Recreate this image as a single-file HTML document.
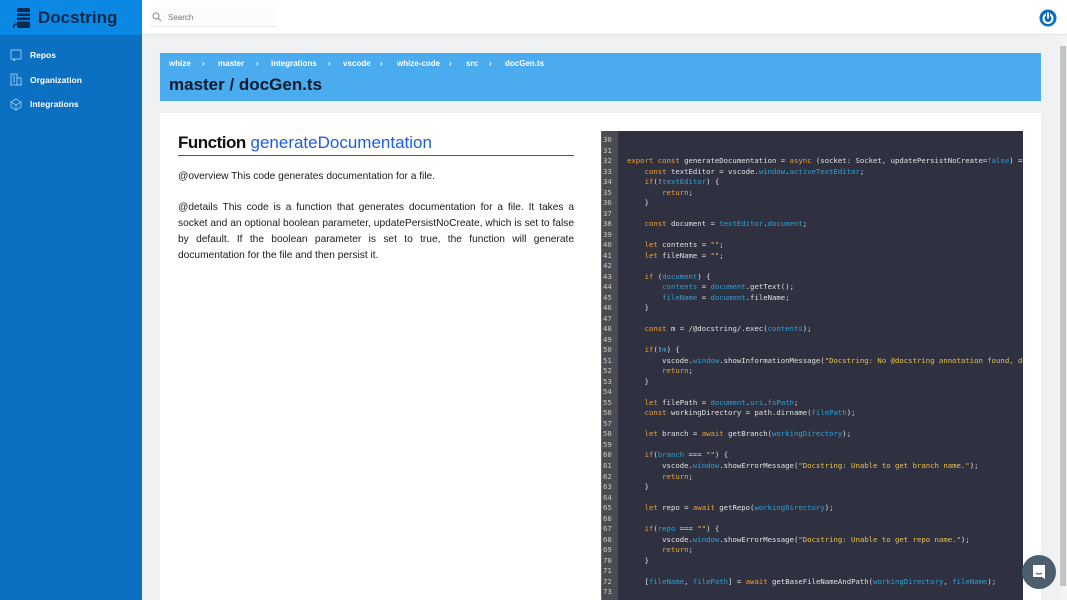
<!DOCTYPE html>
<html><head><meta charset="utf-8"><style>
*{box-sizing:border-box;margin:0;padding:0}
html,body{width:1067px;height:600px;overflow:hidden}
body{font-family:"Liberation Sans",sans-serif;background:#f0f1f3;position:relative}
.side{position:absolute;left:0;top:0;width:142px;height:600px;background:#0b6fc2}
.logo{height:35px;background:#0a88e4;display:flex;align-items:center;padding-left:11px}
.logo span{font-weight:bold;font-size:17px;color:#0c2a4d;margin-left:5px}
.nav{padding-top:8px}
.nav div{height:24.5px;display:flex;align-items:center;padding-left:10px;color:#fff;font-size:8.5px;font-weight:bold}
.nav svg{margin-right:8px}
.top{position:absolute;left:142px;top:0;right:0;height:35px;background:#fff;border-bottom:1px solid #e1e3e6}
.search{position:absolute;left:8px;top:7px;width:127px;height:20px;border-bottom:1px solid #e6e7ea;background:#fcfcfd;font-size:8px;color:#777;padding:6px 0 0 18px}
.pw{position:absolute;right:10px;top:9px}
.sb{position:absolute;left:1059px;top:36px;width:8px;height:564px;background:#f4f4f4}
.sb i{position:absolute;left:1px;top:10px;width:6px;height:540px;background:#c4c4c4}
.crumb{position:absolute;left:160px;top:53px;width:881px;height:48px;background:#4aabee}
.bc span{position:absolute;top:6px;font-size:8px;color:#fff;font-weight:bold;white-space:nowrap}
.crumb h1{position:absolute;left:9px;top:22px;font-size:17px;color:#0d1b2a}
.card{position:absolute;left:160px;top:113px;width:881px;height:487px;background:#fff;overflow:hidden}
.fn{position:absolute;left:18px;top:20px;width:396px;border-bottom:1px solid #555;height:23px;font-size:17px;white-space:nowrap}
.fn b{color:#111;letter-spacing:-.5px}
.fn span{color:#1a5ee6}
.txt{position:absolute;left:18px;top:56px;width:396px;font-size:10.2px;line-height:16px;color:#1a1a1a;text-align:justify}
.code{position:absolute;left:441px;top:18px;width:422px;height:470px;background:#2f3141;overflow:hidden}
.gut{position:absolute;left:0;top:0;width:17px;height:100%;background:#4a4c52;border-left:1px solid #666}
pre{position:absolute;left:2px;top:4px;font-family:"DejaVu Sans Mono","Liberation Mono",monospace;font-size:7.3px;line-height:10.52px;color:#e2e2e2;white-space:pre}
pre .n{color:#c8c8c8;display:inline-block;width:24px}
.k{color:#eaa236}.v{color:#2aa3d8}.s{color:#e8c24a}
.chat{position:absolute;left:1022px;top:555px;width:34px;height:34px;border-radius:50%;background:#4d5f6e}
</style></head><body>
<div class="side">
<div class="logo"><svg width="22" height="24" viewBox="0 0 22 24"><rect x="6" y="2" width="13" height="20" rx="2" fill="#0c2a4d"/><rect x="6" y="6" width="13" height="1.5" fill="#0a88e4"/><rect x="6" y="10" width="13" height="1.5" fill="#0a88e4"/><rect x="6" y="14" width="13" height="1.5" fill="#0a88e4"/><path d="M6 18 Q2 18 3 22" stroke="#0c2a4d" fill="none" stroke-width="1.5"/></svg><span>Docstring</span></div>
<div class="nav">
<div><svg width="12" height="13" viewBox="0 0 12 13"><rect x="1" y="1" width="10" height="9" fill="none" stroke="#8fc4f0"/><rect x="3" y="10" width="2" height="2" fill="#8fc4f0"/></svg>Repos</div>
<div><svg width="12" height="13" viewBox="0 0 12 13"><path d="M1 12V1h6v11M7 5h4v7M0 12h12M3 3h2M3 5h2M3 7h2M3 9h2" fill="none" stroke="#8fc4f0"/></svg>Organization</div>
<div><svg width="12" height="13" viewBox="0 0 12 13"><path d="M6 1l5 3v5l-5 3-5-3V4zM1 4l5 3 5-3M6 7v5" fill="none" stroke="#8fc4f0"/></svg>Integrations</div>
</div></div>
<div class="top"><div class="search"><svg style="position:absolute;left:2px;top:5px" width="10" height="10" viewBox="0 0 10 10"><circle cx="4" cy="4" r="3" fill="none" stroke="#888"/><path d="M6 6l3 3" stroke="#888"/></svg>Search</div>
<svg class="pw" width="18" height="18" viewBox="0 0 18 18"><circle cx="9" cy="9" r="8.5" fill="#0a6fc4"/><circle cx="9" cy="9.5" r="4.5" fill="none" stroke="#fff" stroke-width="2"/><path d="M9 4v6" stroke="#0a6fc4" stroke-width="4"/><path d="M9 3.5v6" stroke="#fff" stroke-width="2"/></svg></div>
<div class="sb"><i></i></div>
<div class="crumb"><div class="bc"><span style="left:9px">whize</span><span style="left:42px">›</span><span style="left:58px">master</span><span style="left:96px">›</span><span style="left:111px">integrations</span><span style="left:168px">›</span><span style="left:183px">vscode</span><span style="left:220px">›</span><span style="left:237px">whize-code</span><span style="left:289px">›</span><span style="left:306px">src</span><span style="left:329px">›</span><span style="left:345px">docGen.ts</span></div><h1>master / docGen.ts</h1></div>
<div class="card">
<div class="fn"><b>Function</b> <span>generateDocumentation</span></div>
<div class="txt"><p>@overview This code generates documentation for a file.</p><p style="margin-top:15px">@details This code is a function that generates documentation for a file. It takes a socket and an optional boolean parameter, updatePersistNoCreate, which is set to false by default. If the boolean parameter is set to true, the function will generate documentation for the file and then persist it.</p></div>
<div class="code"><div class="gut"></div><pre><span class="n">30</span>
<span class="n">31</span>
<span class="n">32</span><span class="k">export const</span> generateDocumentation = <span class="k">async</span> (socket: Socket, updatePersistNoCreate=<span class="v">false</span>) =>
<span class="n">33</span>    <span class="k">const</span> textEditor = vscode.<span class="v">window</span>.<span class="v">activeTextEditor</span>;
<span class="n">34</span>    <span class="k">if</span>(!<span class="v">textEditor</span>) {
<span class="n">35</span>        <span class="k">return</span>;
<span class="n">36</span>    }
<span class="n">37</span>
<span class="n">38</span>    <span class="k">const</span> document = <span class="v">textEditor</span>.<span class="v">document</span>;
<span class="n">39</span>
<span class="n">40</span>    <span class="k">let</span> contents = <span class="s">""</span>;
<span class="n">41</span>    <span class="k">let</span> fileName = <span class="s">""</span>;
<span class="n">42</span>
<span class="n">43</span>    <span class="k">if</span> (<span class="v">document</span>) {
<span class="n">44</span>        <span class="v">contents</span> = <span class="v">document</span>.getText();
<span class="n">45</span>        <span class="v">fileName</span> = <span class="v">document</span>.fileName;
<span class="n">46</span>    }
<span class="n">47</span>
<span class="n">48</span>    <span class="k">const</span> m = /@docstring/.exec(<span class="v">contents</span>);
<span class="n">49</span>
<span class="n">50</span>    <span class="k">if</span>(!<span class="v">m</span>) {
<span class="n">51</span>        vscode.<span class="v">window</span>.showInformationMessage(<span class="s">"Docstring: No @docstring annotation found, do</span>
<span class="n">52</span>        <span class="k">return</span>;
<span class="n">53</span>    }
<span class="n">54</span>
<span class="n">55</span>    <span class="k">let</span> filePath = <span class="v">document</span>.<span class="v">uri</span>.<span class="v">fsPath</span>;
<span class="n">56</span>    <span class="k">const</span> workingDirectory = path.dirname(<span class="v">filePath</span>);
<span class="n">57</span>
<span class="n">58</span>    <span class="k">let</span> branch = <span class="k">await</span> getBranch(<span class="v">workingDirectory</span>);
<span class="n">59</span>
<span class="n">60</span>    <span class="k">if</span>(<span class="v">branch</span> === <span class="s">""</span>) {
<span class="n">61</span>        vscode.<span class="v">window</span>.showErrorMessage(<span class="s">"Docstring: Unable to get branch name."</span>);
<span class="n">62</span>        <span class="k">return</span>;
<span class="n">63</span>    }
<span class="n">64</span>
<span class="n">65</span>    <span class="k">let</span> repo = <span class="k">await</span> getRepo(<span class="v">workingDirectory</span>);
<span class="n">66</span>
<span class="n">67</span>    <span class="k">if</span>(<span class="v">repo</span> === <span class="s">""</span>) {
<span class="n">68</span>        vscode.<span class="v">window</span>.showErrorMessage(<span class="s">"Docstring: Unable to get repo name."</span>);
<span class="n">69</span>        <span class="k">return</span>;
<span class="n">70</span>    }
<span class="n">71</span>
<span class="n">72</span>    [<span class="v">fileName</span>, <span class="v">filePath</span>] = <span class="k">await</span> getBaseFileNameAndPath(<span class="v">workingDirectory</span>, <span class="v">fileName</span>);
<span class="n">73</span>
</pre></div>
</div>
<div class="chat"><svg style="position:absolute;left:9px;top:9px" width="16" height="16" viewBox="0 0 16 16"><path d="M2 1h12v14l-3-2H2z" fill="#fff"/><path d="M5 9q3 2 6 0" stroke="#4d5f6e" fill="none" stroke-width="1.2"/></svg></div>
</body></html>
